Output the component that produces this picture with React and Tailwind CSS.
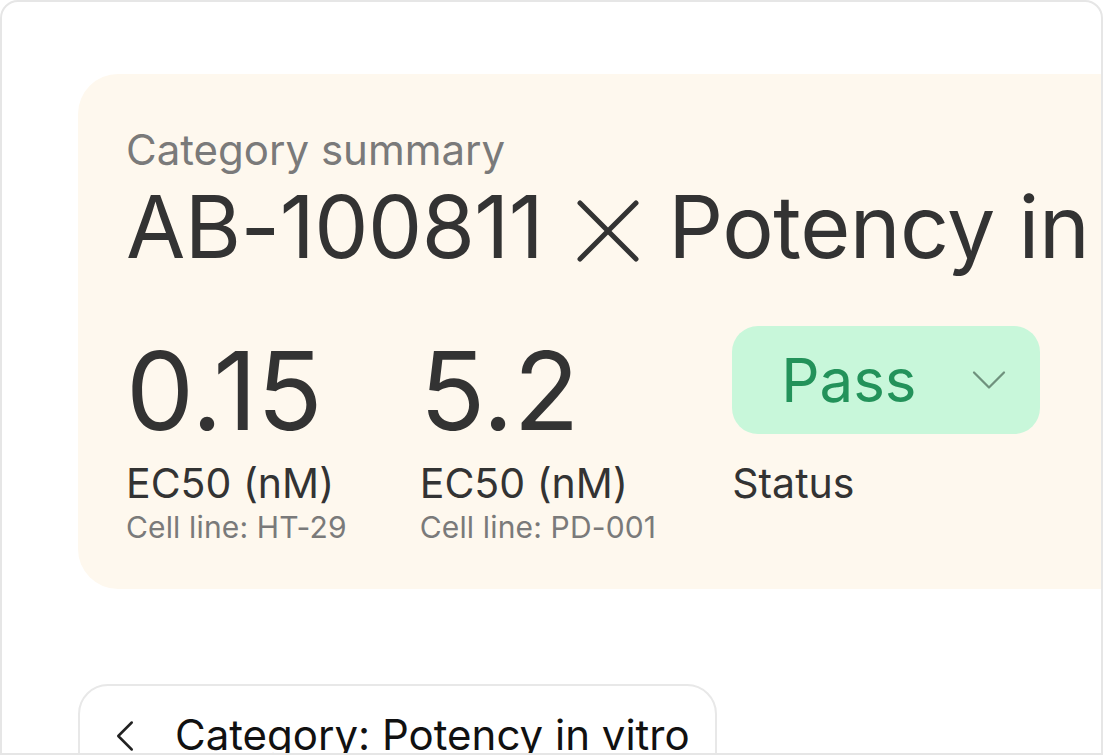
import { ChevronDown, ChevronLeft } from 'lucide-react';

const metrics = [
  { value: '0.15', label: 'EC50 (nM)', line: 'HT-29' },
  { value: '5.2', label: 'EC50 (nM)', line: 'PD-001' },
];

const Metric = ({ value, label, line }) => (
  <div className="flex flex-col">
    <div className="text-[108px] leading-[120px] text-[#333333]">{value}</div>
    <div className="mt-[9px] text-[41px] leading-[46px] text-[#333333]">{label}</div>
    <div className="mt-[3px] text-[30px] leading-[36px] tracking-[0.15px] text-[#7a7a7a]">Cell line: {line}</div>
  </div>
);

export default function App() {
  return (
    <div className="h-[756px] w-[1104px] overflow-hidden bg-white font-['Inter',sans-serif]">
      <div className="h-[755px] w-[1103px] overflow-hidden rounded-t-[18px] border-2 border-[#e6e6e6] bg-white pl-[76px] pt-[72px]">
        <div className="w-[1100px] rounded-l-[40px] bg-[#fef8ee] pb-[44px] pl-[48px] pt-[51px]">
          <div className="text-[42px] leading-[50px] text-[#7a7a7a]">Category summary</div>
          <div className="mt-[2px] flex items-center whitespace-nowrap text-[86px] leading-[100px] tracking-[-0.5px] text-[#333333]">
            <span>AB-100811</span>
            <svg width="62" height="62" viewBox="0 0 62 62" className="ml-[34px] mr-[29px] mt-[8px] shrink-0">
              <path d="M3 3 L59 59 M59 3 L3 59" stroke="#333333" strokeWidth="5" strokeLinecap="round" fill="none" />
            </svg>
            <span>Potency in vitro</span>
          </div>
          <div className="mt-[54px] flex items-start gap-[73px]">
            {metrics.map((m, i) => (
              <Metric key={i} {...m} />
            ))}
            <div className="-mt-[5px] ml-[3px] flex flex-col">
              <button className="flex h-[108px] w-[308px] items-center justify-between rounded-[26px] bg-[#c8f7da] pl-[49px] pr-[21px]">
                <span className="text-[60px] leading-[72px] text-[#23925a]">Pass</span>
                <ChevronDown size={60} strokeWidth={0.9} color="#6f917d" />
              </button>
              <div className="mt-[26px] text-[41px] leading-[46px] text-[#333333]">Status</div>
            </div>
          </div>
        </div>
        <div className="mt-[95px] flex h-[120px] w-[639px] items-start gap-[23px] rounded-t-[30px] border-2 border-[#e8e8e8] pl-[18px] pt-[24px]">
          <ChevronLeft size={54} strokeWidth={1.1} color="#222222" className="-mt-[1px] shrink-0" />
          <span className="whitespace-nowrap text-[42px] leading-[50px] text-[#111111]">Category: Potency in vitro</span>
        </div>
      </div>
    </div>
  );
}
